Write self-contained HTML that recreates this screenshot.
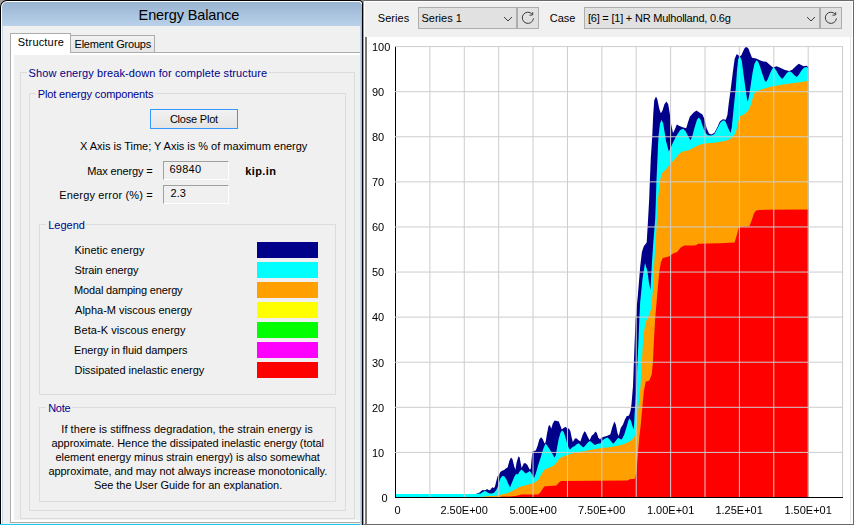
<!DOCTYPE html>
<html><head><meta charset="utf-8"><title>Energy Balance</title>
<style>
html,body{margin:0;padding:0}
body{width:854px;height:525px;position:relative;overflow:hidden;background:#F0F0F0;font-family:"Liberation Sans",Arial,sans-serif;font-size:11px;color:#000}
div{box-sizing:border-box}
.a{position:absolute}
.t{position:absolute;white-space:nowrap;line-height:13px;font-size:11px}
.gb{position:absolute;border:1px solid #DCDCDC}
.gl{position:absolute;height:13px;background:#F0F0F0}
.b .t{color:#00008B}
.tb{position:absolute;border:1px solid;border-color:#A0A0A0 #FFFFFF #FFFFFF #A0A0A0;background:#F0F0F0}
.cb{position:absolute;background:#E1E1E1;border:1px solid #ADADAD}
</style></head><body>
<!-- left window frame -->
<div class="a" style="left:0;top:0;width:363px;height:525px;background:#A0A0A0"></div>
<div class="a" style="left:0;top:0;width:363px;height:540px;background:#000;border-radius:7px 4px 0 0"></div>
<div class="a" style="left:1px;top:1px;width:361px;height:540px;background:#fff;border-radius:6px 3px 0 0"></div>
<div class="a" style="left:2px;top:2px;width:359px;height:24px;background:linear-gradient(#99B4D1,#B9D1EA);border-radius:5px 2px 0 0"></div>
<div class="a" style="left:2px;top:26px;width:359px;height:499px;background:#F0F0F0"></div>
<div class="a" style="left:2px;top:26px;width:1px;height:499px;background:#C3D7EE"></div>
<div class="a" style="left:0;top:524px;width:362px;height:1px;background:#1CC8F0"></div>
<div class="t" style="left:138.6px;top:6px;letter-spacing:-0.12px;font-size:14.5px;line-height:18px">Energy Balance</div>
<!-- tab control -->
<div class="a" style="left:10px;top:52px;width:360px;height:471px;background:#fff;border:1px solid #ACACAC"></div>
<div class="a" style="left:14px;top:55px;width:350px;height:465px;background:#F0F0F0"></div>
<div class="a" style="left:70px;top:35px;width:85px;height:17px;border:1px solid #ACACAC;border-bottom:none;background:linear-gradient(#F2F2F2,#E6E6E6)"></div>
<div class="a" style="left:10px;top:33px;width:61px;height:20px;border:1px solid #ACACAC;border-bottom:none;background:#fff"></div>
<div class="t" style="left:17.8px;top:36px;letter-spacing:0.18px">Structure</div><div class="t" style="left:74.5px;top:38px;letter-spacing:-0.21px">Element Groups</div>
<!-- group boxes -->
<div class="b">
<div class="gb" style="left:20px;top:72px;width:335px;height:447px"></div>
<div class="gl" style="left:27px;top:66px;width:242px"></div><div class="t" style="left:28.6px;top:67px;letter-spacing:0.1px">Show energy break-down for complete structure</div>
<div class="gb" style="left:29px;top:93px;width:317px;height:418px"></div>
<div class="gl" style="left:36px;top:88px;width:119px"></div><div class="t" style="left:37.8px;top:88px;letter-spacing:-0.14px">Plot energy components</div>
<div class="gb" style="left:39px;top:224px;width:297px;height:171px"></div>
<div class="gl" style="left:46px;top:219px;width:40px"></div><div class="t" style="left:48.2px;top:219px">Legend</div>
<div class="gb" style="left:39px;top:407px;width:297px;height:95px"></div>
<div class="gl" style="left:46px;top:402px;width:26px"></div><div class="t" style="left:48.2px;top:402px;letter-spacing:-0.3px">Note</div>
</div>
<div class="a" style="left:150px;top:109px;width:88px;height:20px;border:1px solid #3399FF;background:linear-gradient(#F2F2F2,#E4E4E4)"></div>
<div class="t" style="left:169.9px;top:113px;letter-spacing:-0.21px">Close Plot</div><div class="t" style="left:80px;top:140px;letter-spacing:-0.02px">X Axis is Time; Y Axis is % of maximum energy</div><div class="t" style="left:87.2px;top:165px;letter-spacing:-0.14px">Max energy =</div>
<div class="tb" style="left:163px;top:161px;width:66px;height:19px"></div>
<div class="t" style="left:169.5px;top:163px;letter-spacing:0.25px">69840</div><div class="t" style="left:245.2px;top:165px;letter-spacing:0.42px;font-weight:bold">kip.in</div><div class="t" style="left:59.3px;top:189px;letter-spacing:0.15px">Energy error (%) =</div>
<div class="tb" style="left:163px;top:185px;width:66px;height:19px"></div>
<div class="t" style="left:170.5px;top:187px;letter-spacing:0.1px">2.3</div>
<div class="t" style="left:74.5px;top:244px;letter-spacing:0.02px">Kinetic energy</div><div class="a" style="left:257px;top:242px;width:61px;height:16px;background:#00008B"></div>
<div class="t" style="left:74.5px;top:264px;letter-spacing:-0.11px">Strain energy</div><div class="a" style="left:257px;top:262px;width:61px;height:16px;background:#00FFFF"></div>
<div class="t" style="left:74.1px;top:284px;letter-spacing:-0.18px">Modal damping energy</div><div class="a" style="left:257px;top:282px;width:61px;height:16px;background:#FFA000"></div>
<div class="t" style="left:75.1px;top:304px;letter-spacing:-0.02px">Alpha-M viscous energy</div><div class="a" style="left:257px;top:302px;width:61px;height:16px;background:#FFFF00"></div>
<div class="t" style="left:74.1px;top:324px;letter-spacing:0.07px">Beta-K viscous energy</div><div class="a" style="left:257px;top:322px;width:61px;height:16px;background:#00FF00"></div>
<div class="t" style="left:74.1px;top:344px;letter-spacing:-0.1px">Energy in fluid dampers</div><div class="a" style="left:257px;top:342px;width:61px;height:16px;background:#FF00FF"></div>
<div class="t" style="left:74.5px;top:364px;letter-spacing:-0.04px">Dissipated inelastic energy</div><div class="a" style="left:257px;top:362px;width:61px;height:16px;background:#FF0000"></div>
<div class="t" style="left:61.3px;top:423px;letter-spacing:0.05px">If there is stiffness degradation, the strain energy is</div>
<div class="t" style="left:51.5px;top:437px;letter-spacing:-0.07px">approximate. Hence the dissipated inelastic energy (total</div>
<div class="t" style="left:55.5px;top:451px;letter-spacing:-0.03px">element energy minus strain energy) is also somewhat</div>
<div class="t" style="left:48.4px;top:465px;letter-spacing:-0.04px">approximate, and may not always increase monotonically.</div>
<div class="t" style="left:93.9px;top:479px;letter-spacing:-0.05px">See the User Guide for an explanation.</div>
<div class="a" style="left:360px;top:26px;width:1px;height:499px;background:#C3D7EE"></div>
<div class="a" style="left:361px;top:4px;width:1px;height:521px;background:#5CD6FF"></div>
<div class="a" style="left:362px;top:4px;width:1px;height:521px;background:#000"></div>
<!-- right panel -->
<div class="a" style="left:363px;top:0;width:491px;height:525px;background:#F0F0F0;border-left:1px solid #A0A0A0;border-top:1px solid #696969;border-right:1px solid #696969;border-bottom:1px solid #696969"></div>
<div class="a" style="left:364px;top:1px;width:489px;height:1px;background:#fff"></div>
<div class="a" style="left:364px;top:1px;width:1px;height:523px;background:#fff"></div>
<div class="a" style="left:852px;top:1px;width:1px;height:523px;background:#fff"></div>
<div class="t" style="left:377.8px;top:12px;letter-spacing:0.04px">Series</div>
<div class="cb" style="left:418px;top:7px;width:99px;height:22px"></div>
<div class="t" style="left:421.5px;top:12px">Series 1</div>
<div class="cb" style="left:517px;top:7px;width:22px;height:22px"></div>
<div class="t" style="left:549.8px;top:12px">Case</div>
<div class="cb" style="left:584px;top:7px;width:236px;height:22px"></div>
<div class="t" style="left:587.9px;top:12px;letter-spacing:-0.21px">[6] = [1] + NR Mulholland, 0.6g</div>
<div class="cb" style="left:820px;top:7px;width:22px;height:22px"></div>
<!-- chart panel -->
<div class="a" style="left:365px;top:37px;width:487px;height:487px;background:#fff;border-left:2px solid #7A7A7A"></div>
<div class="a" style="left:850px;top:37px;width:1px;height:486px;background:#E8E8E8"></div>
<svg width="854" height="525" viewBox="0 0 854 525" style="position:absolute;left:0;top:0;will-change:transform">
<path d="M395.0,497 L395.0,494.0 L476.0,494.0 L476.9,493.5 L479.6,492.4 L481.5,490.8 L482.8,490.0 L484.4,490.3 L485.7,490.0 L487.1,488.9 L488.4,490.0 L490.0,490.2 L491.3,488.4 L492.4,487.2 L493.7,487.9 L494.8,487.1 L495.6,483.9 L496.7,479.6 L497.7,475.9 L499.1,474.8 L500.4,472.1 L502.0,470.8 L504.1,470.0 L505.8,468.4 L507.6,467.4 L509.4,460.8 L511.0,457.6 L512.4,459.0 L514.2,466.2 L515.4,469.8 L516.6,462.6 L518.4,456.4 L519.6,457.2 L520.8,463.8 L521.7,468.0 L523.8,463.2 L525.6,463.2 L527.4,465.0 L529.8,469.8 L530.8,468.6 L531.6,459.0 L532.5,451.2 L535.8,450.6 L537.6,445.8 L539.4,439.2 L541.2,437.2 L542.8,439.2 L544.5,443.4 L545.6,442.2 L546.8,434.8 L548.6,425.8 L550.0,425.2 L551.2,428.8 L552.8,423.4 L554.6,420.4 L557.0,421.0 L558.8,421.6 L560.4,425.8 L561.8,429.4 L564.2,427.4 L566.0,427.0 L567.2,428.8 L569.0,428.6 L570.4,431.2 L571.6,437.2 L572.8,442.0 L575.0,438.4 L576.4,438.2 L578.6,440.2 L580.4,441.4 L582.4,435.4 L584.4,431.2 L585.8,432.4 L587.6,436.6 L589.6,440.2 L591.8,435.4 L593.6,434.2 L595.4,431.4 L596.8,433.0 L598.4,437.8 L600.2,439.6 L601.4,437.4 L605.0,436.6 L608.0,435.4 L610.4,434.2 L612.2,427.6 L614.4,421.6 L615.8,424.6 L617.6,433.6 L618.8,436.0 L620.6,428.2 L623.0,424.6 L624.8,419.8 L626.6,416.2 L629.0,415.6 L630.5,411.0 L631.5,404.0 L633.0,386.0 L634.3,351.0 L635.6,318.0 L637.9,295.0 L640.2,266.4 L641.9,252.0 L643.8,246.2 L646.7,242.6 L648.1,218.8 L649.2,199.0 L649.8,182.0 L650.8,158.0 L652.0,140.0 L652.4,133.0 L653.2,115.0 L654.2,100.6 L656.0,96.4 L657.4,99.4 L659.2,108.4 L660.8,113.2 L662.4,110.8 L664.4,104.2 L666.4,101.6 L668.2,104.2 L669.6,112.6 L671.2,124.6 L673.0,133.0 L674.8,129.4 L676.8,124.6 L679.0,125.8 L682.6,127.2 L686.2,128.2 L688.0,122.2 L689.8,116.8 L693.4,112.8 L696.4,110.4 L699.4,112.4 L702.4,114.4 L704.2,118.6 L706.6,128.2 L709.0,133.6 L711.4,134.4 L714.4,132.8 L717.4,127.0 L719.8,121.6 L722.8,119.2 L725.8,119.8 L727.4,115.0 L728.8,103.0 L730.6,90.0 L732.8,72.4 L734.6,59.2 L736.4,54.4 L737.6,54.4 L739.4,56.2 L741.2,55.6 L743.0,51.4 L744.8,47.8 L746.6,47.0 L748.4,48.4 L750.2,53.2 L752.0,57.8 L756.2,58.6 L759.8,60.2 L763.4,61.4 L766.4,61.8 L769.4,64.6 L773.0,67.4 L776.6,66.2 L780.2,67.8 L785.0,70.0 L789.2,71.0 L792.2,69.8 L795.8,66.2 L798.8,63.8 L801.2,65.0 L803.6,66.2 L806.6,65.8 L808.4,67.0 L808.4,497 Z" fill="#00008B"/>
<path d="M395.0,497 L395.0,494.0 L476.0,494.0 L476.9,493.7 L480.7,493.5 L482.8,491.9 L484.7,490.9 L486.0,491.3 L487.6,492.4 L489.7,493.4 L491.9,493.5 L494.0,492.7 L496.1,490.3 L497.7,487.1 L499.1,482.3 L500.4,478.5 L502.0,476.3 L503.3,475.9 L504.7,476.7 L506.3,479.3 L508.4,484.1 L510.0,487.6 L511.8,483.0 L514.2,477.0 L516.0,474.0 L517.8,474.4 L519.6,471.6 L521.4,469.6 L523.2,471.0 L525.6,473.6 L528.0,472.2 L529.8,471.0 L532.2,474.6 L534.0,478.2 L535.8,473.4 L538.2,465.0 L540.6,457.8 L543.0,449.4 L545.5,443.6 L547.5,446.0 L549.8,449.5 L552.2,453.4 L554.4,457.5 L555.8,455.2 L557.0,448.0 L558.8,438.4 L560.6,432.4 L562.0,430.6 L563.6,431.8 L565.4,437.2 L567.2,443.8 L569.0,448.6 L570.2,449.4 L572.0,447.4 L574.4,446.2 L576.8,444.2 L578.6,443.2 L581.0,445.6 L583.4,447.4 L585.8,445.0 L588.2,442.0 L590.0,441.0 L592.4,443.0 L594.8,445.0 L597.8,443.8 L600.8,443.2 L602.6,440.2 L605.0,438.6 L607.4,437.4 L609.2,439.0 L611.6,442.0 L613.4,443.8 L615.8,440.8 L618.2,437.8 L620.0,439.0 L621.8,439.6 L624.2,434.8 L626.6,427.0 L628.4,420.4 L629.6,418.6 L631.2,421.6 L632.6,426.4 L633.8,429.4 L634.5,415.0 L635.7,398.3 L636.9,374.5 L638.6,338.8 L639.4,318.0 L640.2,302.0 L642.6,278.0 L645.0,263.0 L647.4,271.0 L649.0,283.0 L650.5,290.0 L651.7,266.4 L653.3,242.6 L655.2,218.8 L655.8,203.0 L656.4,182.0 L657.5,158.0 L658.0,146.0 L658.6,135.4 L660.0,123.4 L661.6,119.8 L663.2,123.4 L664.8,133.0 L666.0,141.0 L668.8,151.4 L671.2,146.6 L673.0,142.6 L676.6,135.4 L680.2,130.0 L683.2,128.8 L685.6,131.2 L688.0,136.0 L690.4,140.2 L692.2,136.6 L694.6,127.6 L697.0,119.8 L698.8,117.4 L700.6,119.8 L703.0,127.0 L705.4,132.8 L707.8,135.2 L711.4,135.5 L714.4,134.0 L717.4,128.2 L720.4,122.6 L722.8,120.4 L724.5,120.4 L725.8,122.2 L728.2,128.2 L730.6,133.0 L731.8,127.0 L733.0,115.0 L734.8,97.0 L735.8,88.0 L737.0,70.0 L738.2,59.2 L740.0,56.2 L741.8,61.0 L743.6,74.8 L745.4,88.0 L747.2,100.0 L747.8,101.5 L749.0,96.4 L750.8,84.4 L752.6,72.4 L754.4,64.0 L756.4,60.2 L758.0,61.4 L759.8,65.8 L762.2,73.6 L764.6,80.2 L766.0,82.0 L767.6,79.6 L770.0,73.6 L772.4,68.6 L774.2,67.8 L776.0,70.0 L779.0,75.4 L782.0,79.0 L783.8,77.2 L786.8,73.0 L789.2,71.2 L791.6,72.2 L794.6,75.4 L796.8,77.0 L798.8,74.8 L801.8,70.0 L804.2,67.4 L806.6,67.0 L808.4,68.6 L808.4,497 Z" fill="#00FFFF"/>
<path d="M481.0,497 L481.0,497.0 L483.3,496.4 L492.4,496.1 L498.8,495.6 L502.0,494.3 L506.3,493.5 L510.0,491.9 L513.0,490.5 L519.0,487.2 L522.6,486.0 L528.6,484.4 L534.0,483.0 L538.2,480.0 L541.8,473.4 L544.8,469.2 L549.0,468.0 L553.8,465.6 L557.0,462.0 L559.4,458.3 L563.0,456.4 L569.0,454.6 L575.0,452.8 L584.6,451.0 L593.0,449.4 L601.4,448.0 L611.0,447.0 L619.4,445.4 L626.6,443.0 L631.4,440.2 L634.4,437.0 L636.0,431.0 L637.3,422.0 L638.5,406.0 L640.5,386.4 L641.8,362.6 L643.5,334.0 L645.7,322.0 L648.3,317.0 L651.0,309.3 L652.9,290.2 L654.0,266.4 L655.7,242.6 L656.9,218.8 L658.0,199.0 L659.2,188.0 L660.4,178.4 L662.2,173.0 L665.8,169.4 L670.6,163.4 L675.4,158.6 L679.0,153.8 L682.6,151.4 L688.6,150.2 L694.4,147.2 L699.4,144.8 L706.6,143.2 L716.2,142.4 L721.6,141.4 L727.6,140.2 L731.8,137.8 L734.8,134.2 L736.6,129.4 L738.4,121.0 L740.2,116.0 L743.2,115.0 L746.2,112.6 L749.2,109.0 L751.4,103.0 L753.2,96.0 L755.2,92.0 L759.8,90.0 L765.8,88.0 L773.0,86.2 L782.6,84.6 L792.2,83.2 L801.8,82.0 L808.4,80.8 L808.4,497 Z" fill="#FFA000"/>
<path d="M500.0,497 L500.0,497.0 L501.5,496.6 L510.0,496.4 L515.0,496.0 L517.8,495.6 L521.4,494.4 L538.2,494.4 L540.6,492.0 L544.2,486.4 L549.0,486.0 L556.4,485.4 L560.0,481.6 L561.8,480.9 L627.8,480.6 L629.6,479.2 L635.0,478.8 L636.5,471.0 L638.0,453.0 L639.3,437.0 L640.5,426.9 L642.1,410.2 L643.8,391.2 L645.7,381.7 L649.3,380.5 L651.7,374.5 L652.9,362.6 L654.0,338.8 L655.2,318.0 L657.6,290.2 L659.3,271.2 L661.0,261.7 L662.9,258.1 L668.8,256.4 L673.6,253.3 L677.1,252.1 L680.7,247.4 L684.3,245.5 L693.8,245.5 L696.0,245.2 L698.2,243.7 L719.7,243.3 L734.6,242.5 L736.8,235.1 L739.0,227.0 L749.4,226.2 L751.7,220.3 L753.9,213.6 L756.1,210.6 L759.1,209.9 L808.4,209.4 L808.4,497 Z" fill="#FF0000"/>
<rect x="395" y="46" width="1" height="452" fill="#000"/>
<g stroke="#CDCDCD" stroke-width="1"><line x1="429.89" y1="46" x2="429.89" y2="497"/><line x1="464.28" y1="46" x2="464.28" y2="497"/><line x1="498.67" y1="46" x2="498.67" y2="497"/><line x1="533.06" y1="46" x2="533.06" y2="497"/><line x1="567.45" y1="46" x2="567.45" y2="497"/><line x1="601.84" y1="46" x2="601.84" y2="497"/><line x1="636.23" y1="46" x2="636.23" y2="497"/><line x1="670.62" y1="46" x2="670.62" y2="497"/><line x1="705.01" y1="46" x2="705.01" y2="497"/><line x1="739.40" y1="46" x2="739.40" y2="497"/><line x1="773.79" y1="46" x2="773.79" y2="497"/><line x1="808.18" y1="46" x2="808.18" y2="497"/><line x1="842.57" y1="46" x2="842.57" y2="497"/><line x1="395" y1="46.60" x2="843" y2="46.60"/><line x1="395" y1="91.69" x2="843" y2="91.69"/><line x1="395" y1="136.78" x2="843" y2="136.78"/><line x1="395" y1="181.87" x2="843" y2="181.87"/><line x1="395" y1="226.96" x2="843" y2="226.96"/><line x1="395" y1="272.05" x2="843" y2="272.05"/><line x1="395" y1="317.14" x2="843" y2="317.14"/><line x1="395" y1="362.23" x2="843" y2="362.23"/><line x1="395" y1="407.32" x2="843" y2="407.32"/><line x1="395" y1="452.41" x2="843" y2="452.41"/></g>
<rect x="395" y="497" width="448" height="1" fill="#000"/>
<g font-family="Liberation Sans, Arial, sans-serif" font-size="11" fill="#000"><text x="372.0" y="50.5">100</text><text x="372.0" y="95.5">90</text><text x="372.0" y="140.5">80</text><text x="372.0" y="185.5">70</text><text x="372.0" y="230.5">60</text><text x="372.0" y="275.5">50</text><text x="372.0" y="320.5">40</text><text x="372.0" y="366.5">30</text><text x="372.0" y="411.5">20</text><text x="372.0" y="456.5">10</text><text x="381.5" y="501.5">0</text><text x="397.6" y="514" text-anchor="middle">0</text><text x="464.1" y="514" text-anchor="middle">2.50E+00</text><text x="533.1" y="514" text-anchor="middle">5.00E+00</text><text x="601.6" y="514" text-anchor="middle">7.50E+00</text><text x="670.6" y="514" text-anchor="middle">1.00E+01</text><text x="739.1" y="514" text-anchor="middle">1.25E+01</text><text x="808.1" y="514" text-anchor="middle">1.50E+01</text></g>
<g fill="none" stroke="#3C3C3C" stroke-width="1"><path d="M504.1,17.0 L508.0,21.0 L511.9,17.0"/><path d="M533.47,18.39 A5.6,5.6 0 1 1 532.19,14.20"/><path d="M529.5,15.2 L532.7,14.9 L532.7,12.2"/><path d="M807.1,17.0 L811.0,21.0 L814.9,17.0"/><path d="M836.47,18.39 A5.6,5.6 0 1 1 835.19,14.20"/><path d="M832.5,15.2 L835.7,14.9 L835.7,12.2"/></g>
</svg>
</body></html>
